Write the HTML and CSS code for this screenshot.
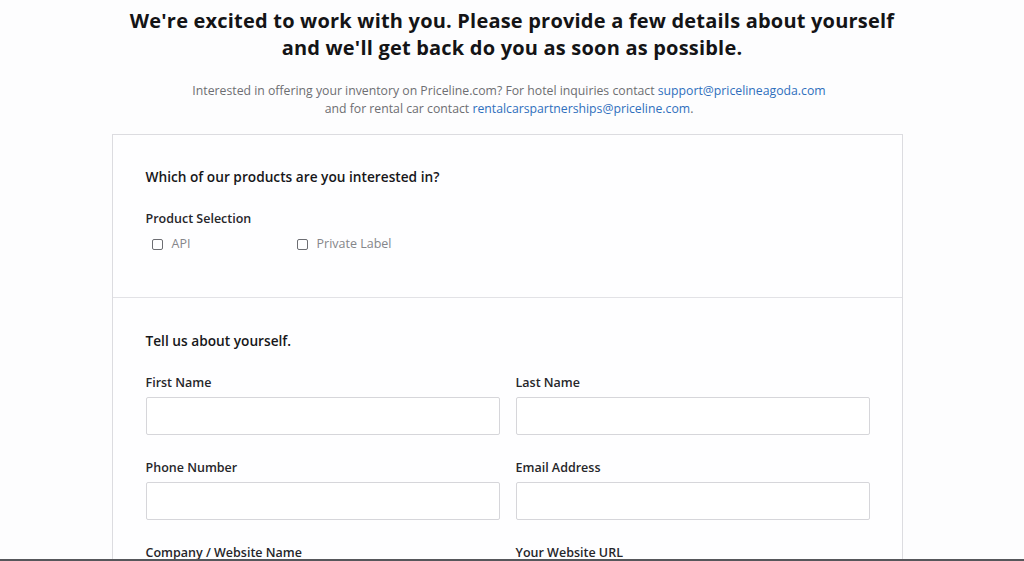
FILE: index.html
```html
<!DOCTYPE html>
<html lang="en">
<head>
<meta charset="utf-8">
<title>Partner with Priceline</title>
<link rel="stylesheet" href="styles.css">
</head>
<body>
<header class="intro">
  <h1 class="title">We're excited to work with you. Please provide a few details about yourself and we'll get back do you as soon as possible.</h1>
  <p class="lead">Interested in offering your inventory on Priceline.com? For hotel inquiries contact <a href="#">support@pricelineagoda.com</a><br>and for rental car contact <a href="#">rentalcarspartnerships@priceline.com</a>.</p>
</header>
<main class="page">
  <form class="card">
    <section class="section">
      <h2 class="section-title">Which of our products are you interested in?</h2>
      <div class="field-label">Product Selection</div>
      <div class="options">
        <label class="option"><span class="box"></span>API</label>
        <label class="option"><span class="box"></span>Private Label</label>
      </div>
    </section>
    <section class="section">
      <h2 class="section-title">Tell us about yourself.</h2>
      <div class="grid">
        <label class="field"><span class="field-label">First Name</span><span class="input"></span></label>
        <label class="field"><span class="field-label">Last Name</span><span class="input"></span></label>
        <label class="field"><span class="field-label">Phone Number</span><span class="input"></span></label>
        <label class="field"><span class="field-label">Email Address</span><span class="input"></span></label>
        <label class="field"><span class="field-label">Company / Website Name</span><span class="input"></span></label>
        <label class="field"><span class="field-label">Your Website URL</span><span class="input"></span></label>
      </div>
    </section>
  </form>
</main>
<div class="screen-edge"></div>
</body>
</html>
```
FILE: styles.css
```css
html, body {
  margin: 0;
  padding: 0;
  background: #fdfdfe;
  overflow: hidden;
  height: 561px;
}
body {
  font-family: "Open Sans", "DejaVu Sans", sans-serif;
  color: #1a1a1a;
}
.intro {
  text-align: center;
}
.title {
  max-width: 800px;
  margin: 0 auto;
  padding-top: 7px;
  font-size: 20px;
  line-height: 27px;
  font-weight: 700;
  letter-spacing: 0.2px;
  color: #141416;
}
.lead {
  margin: 21px 0 0;
  padding-right: 6px;
  font-size: 12.25px;
  line-height: 18px;
  color: #6d6e72;
}
.lead a {
  color: #2f6fbd;
  text-decoration: none;
}
.page {
  width: 791px;
  margin: 0 auto;
  padding-right: 10px;
}
.card {
  margin-top: 16px;
  border: 1.5px solid #dcdce0;
  background: #fefeff;
}
.section {
  padding: 33px 33px 45px 33px;
}
.section + .section {
  padding-top: 34px;
  border-top: 1.5px solid #e2e2e6;
}
.section-title {
  margin: 0 0 25px;
  font-size: 13.7px;
  line-height: 18px;
  font-weight: 600;
  color: #17171a;
}
.field-label {
  display: block;
  font-size: 12.5px;
  line-height: 16px;
  font-weight: 600;
  color: #26262a;
}
.options {
  display: flex;
  margin-top: 9px;
  padding-left: 6px;
}
.option {
  display: flex;
  align-items: center;
  gap: 9px;
  width: 145px;
  font-size: 12.5px;
  line-height: 16px;
  color: #85868a;
}
.box {
  width: 9px;
  height: 9px;
  border: 1.3px solid #6c6d72;
  border-radius: 2px;
}
.grid {
  display: grid;
  grid-template-columns: 354px 354px;
  column-gap: 16px;
  row-gap: 25px;
}
.field {
  display: flex;
  flex-direction: column;
  gap: 6px;
}
.input {
  display: block;
  height: 36px;
  border: 1px solid #d6d6da;
  border-radius: 2px;
  background: #fff;
}
.screen-edge {
  position: fixed;
  left: 0;
  right: 0;
  bottom: 0;
  height: 2px;
  background: #56575b;
}
```
